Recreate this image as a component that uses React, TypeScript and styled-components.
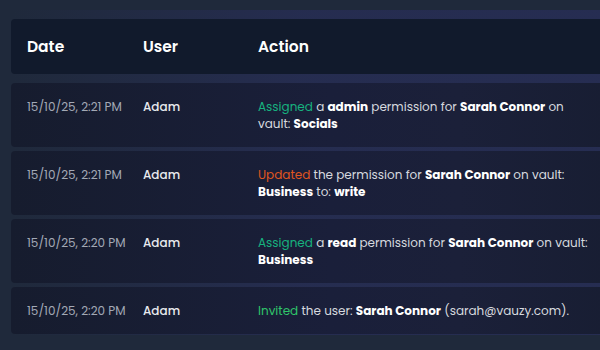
import React from "react";
import styled, { createGlobalStyle } from "styled-components";

const GlobalStyle = createGlobalStyle`
  html, body {
    margin: 0;
    padding: 0;
    width: 600px;
    height: 350px;
    overflow: hidden;
    background: #1f293b;
  }
  body {
    font-family: "Poppins", "Inter", "Noto Sans", sans-serif;
  }
`;

const Page = styled.div`
  width: 600px;
  height: 350px;
  padding: 10px 0 0 11px;
  box-sizing: border-box;
  background: #1f293b;
  overflow: hidden;
`;

const Log = styled.div`
  width: 640px;
  padding: 9px 0 1px;
  display: flex;
  flex-direction: column;
  gap: 4px;
  background: linear-gradient(
    to right,
    rgba(38, 45, 82, 0) 0%,
    rgba(38, 45, 82, 0.9) 45%,
    rgba(38, 45, 82, 1) 100%
  );
`;

const Row = styled.div<{ $head?: boolean }>`
  display: grid;
  grid-template-columns: 116px 115px 332px 1fr;
  align-items: start;
  padding: ${(p) => (p.$head ? "18px 16px" : "15px 16px")};
  border-radius: 4px;
  background: ${(p) =>
    p.$head
      ? "#111a2c"
      : "linear-gradient(to right, #161c2e 0%, #1a1f3a 50%, #1b2039 70%, #171d31 100%)"};
  margin-bottom: ${(p) => (p.$head ? "5px" : "0")};
`;

const HeadCell = styled.div`
  color: #ffffff;
  font-size: 15.5px;
  font-weight: 600;
  line-height: 19px;
`;

const DateCell = styled.div`
  color: #a3a9b6;
  font-size: 12px;
  line-height: 17px;
`;

const UserCell = styled.div`
  color: #e8eaee;
  font-size: 12px;
  font-weight: 500;
  line-height: 17px;
`;

const ActionCell = styled.div`
  color: #d6d9df;
  font-size: 12px;
  line-height: 17px;
`;

const Strong = styled.b`
  color: #ffffff;
  font-weight: 700;
`;

const Verb = styled.span<{ $tone: "assign" | "update" | "invite" }>`
  color: ${(p) =>
    p.$tone === "update" ? "#e0561f" : p.$tone === "invite" ? "#2fc46a" : "#17b27f"};
`;

const entries = [
  {
    date: "15/10/25, 2:21 PM",
    user: "Adam",
    action: (
      <>
        <Verb $tone="assign">Assigned</Verb> a <Strong>admin</Strong> permission for{" "}
        <Strong>Sarah Connor</Strong> on vault: <Strong>Socials</Strong>
      </>
    ),
  },
  {
    date: "15/10/25, 2:21 PM",
    user: "Adam",
    action: (
      <>
        <Verb $tone="update">Updated</Verb> the permission for <Strong>Sarah Connor</Strong> on
        vault: <Strong>Business</Strong> to: <Strong>write</Strong>
      </>
    ),
  },
  {
    date: "15/10/25, 2:20 PM",
    user: "Adam",
    action: (
      <>
        <Verb $tone="assign">Assigned</Verb> a <Strong>read</Strong> permission for{" "}
        <Strong>Sarah Connor</Strong> on vault: <Strong>Business</Strong>
      </>
    ),
  },
  {
    date: "15/10/25, 2:20 PM",
    user: "Adam",
    action: (
      <>
        <Verb $tone="invite">Invited</Verb> the user: <Strong>Sarah Connor</Strong>{" "}
        (sarah@vauzy.com).
      </>
    ),
  },
];

export default function App() {
  return (
    <Page>
      <GlobalStyle />
      <Log>
        <Row $head>
          <HeadCell>Date</HeadCell>
          <HeadCell>User</HeadCell>
          <HeadCell>Action</HeadCell>
        </Row>
        {entries.map((e, i) => (
          <Row key={i}>
            <DateCell>{e.date}</DateCell>
            <UserCell>{e.user}</UserCell>
            <ActionCell>{e.action}</ActionCell>
          </Row>
        ))}
      </Log>
    </Page>
  );
}
